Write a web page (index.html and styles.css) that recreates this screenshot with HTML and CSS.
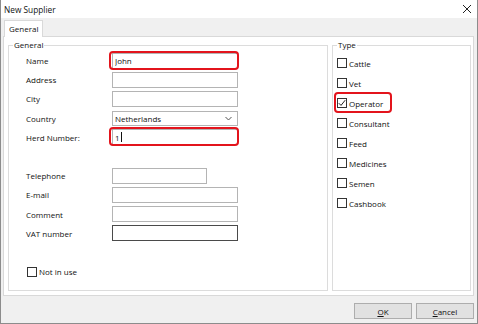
FILE: index.html
```html
<!DOCTYPE html>
<html lang="en">
<head>
    <meta charset="UTF-8">
    <title>New Supplier</title>
    <link rel="stylesheet" href="styles.css">
</head>
<body>
    <div class="window">
        <div class="titlebar">
            <span class="title">New Supplier</span>
            <svg class="close" width="10" height="10" viewBox="0 0 10 10">
                <path d="M1 1 L9 9 M9 1 L1 9" stroke="#222" stroke-width="1" fill="none"/>
            </svg>
        </div>
        <div class="dialog-body">
            <div class="tabs">
                <div class="tab active">General</div>
            </div>
            <div class="panel">
                <fieldset class="group general">
                    <legend>General</legend>
                    <div class="form">
                        <label>Name</label>
                        <span class="field hl"><input class="input" type="text" value="John"></span>

                        <label>Address</label>
                        <span class="field"><input class="input" type="text"></span>

                        <label>City</label>
                        <span class="field"><input class="input" type="text"></span>

                        <label>Country</label>
                        <span class="field">
                            <span class="select">
                                <span>Netherlands</span>
                                <svg width="7" height="5" viewBox="0 0 7 5"><path d="M0.5 1 L3.5 4 L6.5 1" stroke="#555" fill="none"/></svg>
                            </span>
                        </span>

                        <label>Herd Number:</label>
                        <span class="field hl"><span class="input">1<i class="caret"></i></span></span>

                        <span class="spacer"></span>

                        <label>Telephone</label>
                        <span class="field"><input class="input short" type="text"></span>

                        <label>E-mail</label>
                        <span class="field"><input class="input wide" type="text"></span>

                        <label>Comment</label>
                        <span class="field"><input class="input" type="text"></span>

                        <label>VAT number</label>
                        <span class="field"><input class="input focus" type="text"></span>

                        <span class="spacer"></span>

                        <span class="check-row full"><span class="box"></span>Not in use</span>
                    </div>
                </fieldset>
                <fieldset class="group type">
                    <legend>Type</legend>
                    <div class="checks">
                        <span class="check-row"><span class="box"></span>Cattle</span>
                        <span class="check-row"><span class="box"></span>Vet</span>
                        <span class="check-row hl-check"><span class="box">
                            <svg width="8" height="8" viewBox="0 0 8 8"><path d="M0.8 4.2 L3 6.4 L7.2 1.2" stroke="#222" stroke-width="1" fill="none"/></svg>
                        </span>Operator</span>
                        <span class="check-row"><span class="box"></span>Consultant</span>
                        <span class="check-row"><span class="box"></span>Feed</span>
                        <span class="check-row"><span class="box"></span>Medicines</span>
                        <span class="check-row"><span class="box"></span>Semen</span>
                        <span class="check-row"><span class="box"></span>Cashbook</span>
                    </div>
                </fieldset>
            </div>
            <div class="buttons">
                <button class="btn"><u>O</u>K</button>
                <button class="btn"><u>C</u>ancel</button>
            </div>
        </div>
    </div>
</body>
</html>
```

FILE: styles.css
```css
* {
    box-sizing: border-box;
}
body {
    margin: 0;
    font-family: "Open Sans", "Noto Sans", sans-serif;
    font-size: 8px;
    color: #111;
    background: #fff;
}
.window {
    width: 478px;
    height: 324px;
    border: 1px solid #8c8c8c;
    border-top: none;
    display: flex;
    flex-direction: column;
}
.titlebar {
    height: 18px;
    background: #fff;
    display: flex;
    align-items: center;
    justify-content: space-between;
    padding: 0 5px 0 3px;
    font-size: 8.3px;
}
.dialog-body {
    flex: 1;
    background: #f0f0f0;
    padding: 2px 3px 0 2px;
    display: flex;
    flex-direction: column;
}
.tabs {
    display: flex;
    height: 16px;
    padding-left: 1px;
}
.tab {
    border: 1px solid #d9d9d9;
    border-bottom: none;
    background: #fff;
    padding: 0 4px;
    line-height: 15px;
    margin-bottom: -1px;
    position: relative;
}
.panel {
    height: 260px;
    border: 1px solid #d9d9d9;
    background: #fff;
    display: flex;
    gap: 4px;
    padding: 3px 2px 4px 4px;
}
.group {
    margin: 0;
    border: 1px solid #dcdcdc;
    padding: 0;
    min-width: 0;
}
.group legend {
    padding: 0 1px;
    margin-left: 4px;
    line-height: 10px;
}
.general {
    width: 320px;
}
.type {
    flex: 1;
}
.form {
    display: grid;
    grid-template-columns: 86px 1fr;
    grid-auto-rows: 19.2px;
    align-items: center;
    padding: 1px 0 0 17px;
}
.spacer {
    grid-column: 1 / -1;
}
.field {
    position: relative;
    display: flex;
    width: 126px;
}
.input {
    width: 126px;
    height: 16px;
    border: 1px solid #b4b4b4;
    background: #fff;
    font: inherit;
    color: inherit;
    padding: 0 2px;
    outline: none;
    display: flex;
    align-items: center;
}
.input.short {
    width: 95px;
}
.input.wide {
    width: 206px;
}
.input.focus {
    border-color: #4a4a4a;
}
.caret {
    display: inline-block;
    width: 1px;
    height: 10px;
    background: #111;
    margin-left: 1px;
}
.hl::after {
    content: "";
    position: absolute;
    top: -2px;
    bottom: -1px;
    left: -3px;
    right: -1px;
    border: 2px solid #e3141c;
    border-radius: 4px;
}
.select {
    width: 126px;
    height: 15px;
    border: 1px solid #b4b4b4;
    background: #fff;
    display: flex;
    align-items: center;
    justify-content: space-between;
    padding: 0 5px 0 2px;
}
.check-row {
    display: flex;
    align-items: center;
    gap: 2px;
    position: relative;
}
.check-row.full {
    grid-column: 1 / -1;
    margin-left: 1px;
}
.box {
    width: 10px;
    height: 10px;
    border: 1px solid #333;
    background: #fff;
    display: flex;
    align-items: center;
    justify-content: center;
}
.checks {
    display: flex;
    flex-direction: column;
    padding: 8px 0 0 4px;
    gap: 10px;
}
.checks .check-row {
    height: 10px;
}
.hl-check::after {
    content: "";
    position: absolute;
    top: -6px;
    bottom: -5px;
    left: -3px;
    width: 54px;
    border: 2px solid #e3141c;
    border-radius: 4px;
}
.buttons {
    display: flex;
    justify-content: flex-end;
    gap: 4px;
    padding: 7px 0 0;
}
.btn {
    width: 58px;
    height: 16px;
    border: 1px solid #adadad;
    background: #e1e1e1;
    font: inherit;
    color: inherit;
    padding: 0;
}
```
